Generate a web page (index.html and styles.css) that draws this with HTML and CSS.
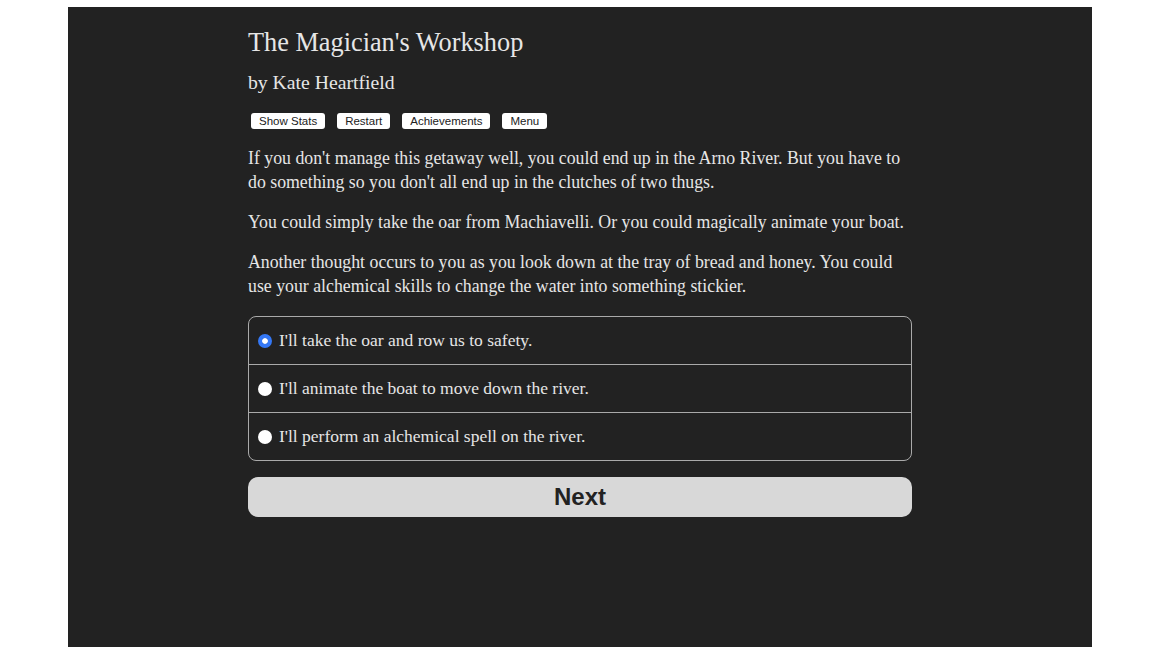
FILE: index.html
```html
<!DOCTYPE html>
<html>

<head>
    <meta charset="UTF-8">
    <title>The Magician's Workshop</title>
    <link rel="stylesheet" href="styles.css">
</head>

<body>
    <div id="pagina">
        <div id="conteudo">
            <h1 id="titulo">The Magician's Workshop</h1>
            <h2 id="autor">by Kate Heartfield</h2>
            <div id="botoes">
                <button class="botao">Show Stats</button>
                <button class="botao">Restart</button>
                <button class="botao">Achievements</button>
                <button class="botao">Menu</button>
            </div>
            <div id="texto">
                <p>If you don't manage this getaway well, you could end up in the Arno River. But you have to do something so you don't all end up in the clutches of two thugs.</p>
                <p>You could simply take the oar from Machiavelli. Or you could magically animate your boat.</p>
                <p>Another thought occurs to you as you look down at the tray of bread and honey. You could use your alchemical skills to change the water into something stickier.</p>
            </div>
            <form id="escolhas">
                <label class="escolha"><input type="radio" name="opcao" checked> I'll take the oar and row us to safety.</label>
                <label class="escolha"><input type="radio" name="opcao"> I'll animate the boat to move down the river.</label>
                <label class="escolha"><input type="radio" name="opcao"> I'll perform an alchemical spell on the river.</label>
            </form>
            <button id="proximo">Next</button>
        </div>
    </div>
</body>

</html>
```
FILE: styles.css
```css
body {
    margin: 7px 0 0 0;
    background-color: #fff;
    font-family: "Liberation Serif", serif;
}

#pagina {
    width: 1024px;
    height: 640px;
    margin: 0 auto;
    background-color: #222;
    color: #e6e6e6;
}

#conteudo {
    width: 664px;
    margin: 0 auto;
    padding-top: 21px;
}

#titulo {
    margin: 0;
    font-size: 26.3px;
    font-weight: 400;
    line-height: 30px;
}

#autor {
    margin: 10px 0 0 0;
    font-size: 19.7px;
    font-weight: 400;
    line-height: 28px;
}

#botoes {
    display: flex;
    gap: 12px;
    margin: 17px 0 0 3px;
}

.botao {
    font-family: "Liberation Sans", Arial, sans-serif;
    font-size: 11.5px;
    color: #222;
    background-color: #fff;
    border: none;
    border-radius: 3px;
    height: 16px;
    padding: 0 8px;
    line-height: 16px;
}

#texto {
    margin-top: 17px;
}

#texto p {
    margin: 0 0 16px 0;
    font-size: 17.8px;
    line-height: 24px;
}

#escolhas {
    margin-top: 18px;
    border: 1px solid #aaa;
    border-radius: 8px;
}

.escolha {
    display: flex;
    align-items: center;
    gap: 7px;
    height: 47px;
    padding-left: 9px;
    font-size: 17.5px;
    border-top: 1px solid #aaa;
}

.escolha:first-child {
    border-top: none;
}

.escolha input {
    appearance: none;
    margin: 0;
    width: 14px;
    height: 14px;
    border-radius: 50%;
    background-color: #fff;
}

.escolha input:checked {
    background-color: #3478f6;
    border: 4.5px solid #3478f6;
    background-clip: padding-box;
    box-shadow: inset 0 0 0 10px #fff;
}

#proximo {
    display: block;
    width: 100%;
    height: 40px;
    margin-top: 16px;
    border: none;
    border-radius: 10px;
    background-color: #d8d8d8;
    color: #222;
    font-family: "Liberation Sans", Arial, sans-serif;
    font-size: 24px;
    font-weight: 700;
}
```
